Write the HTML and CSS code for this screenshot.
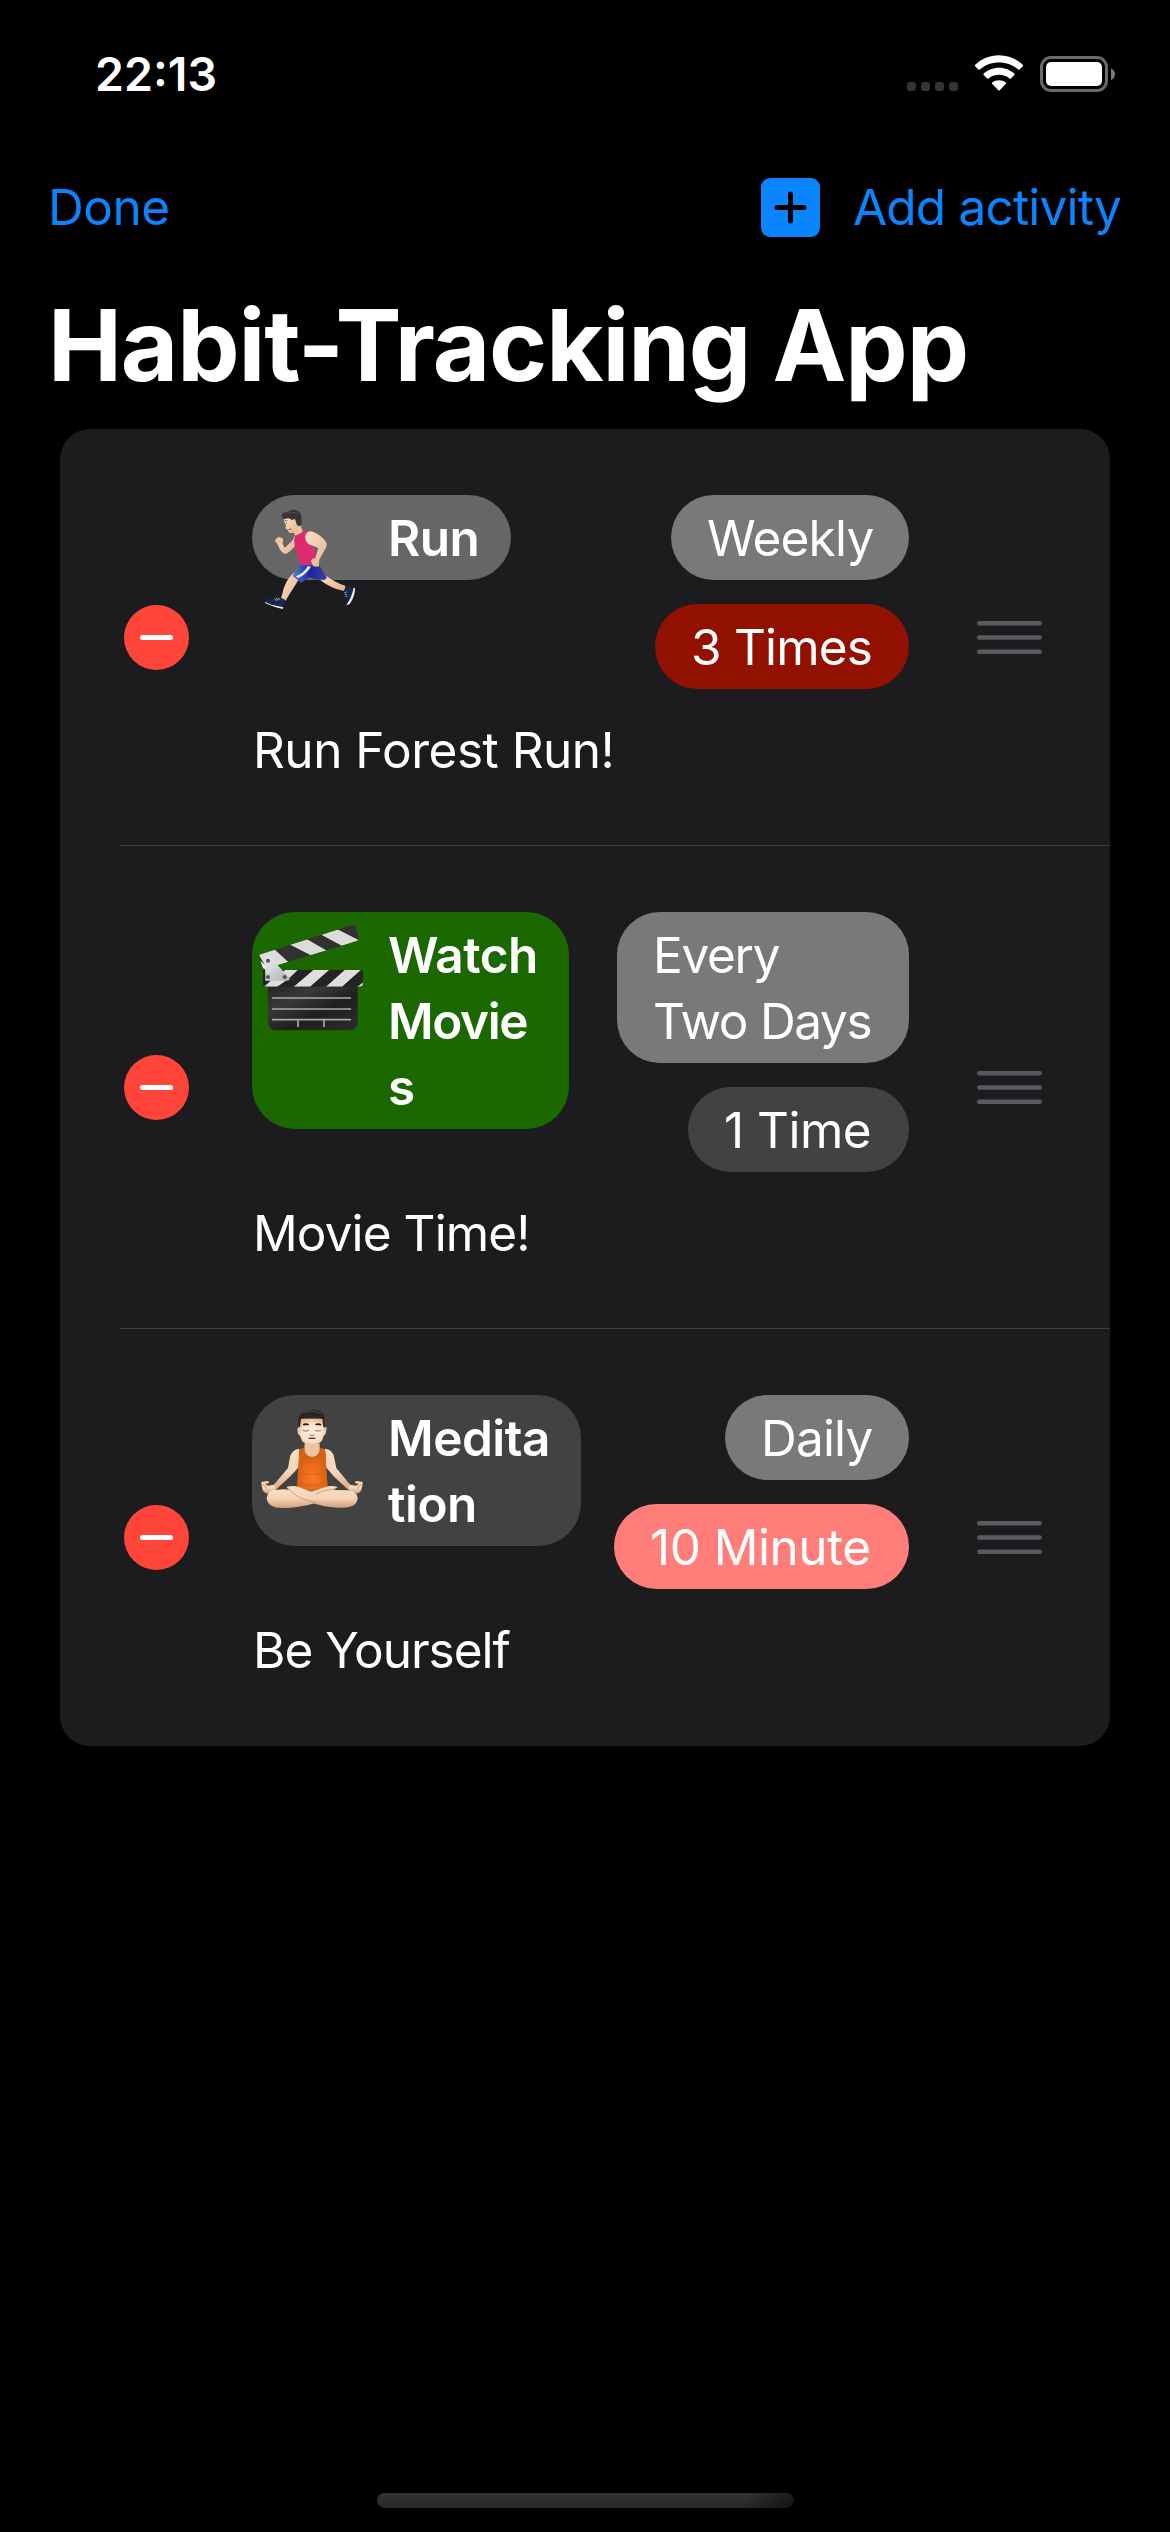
FILE: index.html
```html
<!DOCTYPE html>
<html lang="en">
<head>
<meta charset="utf-8">
<title>Habit-Tracking App</title>
<link rel="stylesheet" href="styles.css">
</head>
<body>
<header class="status">
  <span class="clock">22:13</span>
  <span class="signals">
    <svg class="dots" viewBox="0 0 51 9" width="51" height="9" fill="#343434"><rect width="9" height="9" rx="3"/><rect x="14" width="9" height="9" rx="3"/><rect x="28" width="9" height="9" rx="3"/><rect x="42" width="9" height="9" rx="3"/></svg>
    <svg class="wifi" viewBox="0 0 48 36" width="48" height="36" fill="#fff">
      <path d="M24 .2C33.200 .2 41.600 3.800 47.800 9.700Q48.500 10.500 47.800 11.300L44.600 14.500Q43.900 15.200 43.100 14.500C38.100 9.900 31.400 7.500 24 7.500S9.900 9.900 4.900 14.500Q4.100 15.200 3.400 14.500L.2 11.300Q-.5 10.500 .2 9.700C6.400 3.800 14.800 .2 24 .2Z"/>
      <path d="M24 12.700C29.900 12.700 35.300 15 39.300 18.600Q40 19.300 39.300 20L35.900 23.400Q35.200 24 34.500 23.400C31.700 21 28 19.700 24 19.700S16.300 21 13.500 23.400Q12.800 24 12.100 23.400L8.700 20Q8 19.300 8.700 18.600C12.700 15 18.100 12.700 24 12.700Z"/>
      <path d="M24 25.200Q28.200 25.200 30.800 27.600Q31.400 28.300 30.800 29L24.700 35.200Q24 35.900 23.300 35.200L17.200 29Q16.600 28.300 17.200 27.600Q19.800 25.200 24 25.200Z"/>
    </svg>
    <svg class="battery" viewBox="0 0 75 36" width="75" height="36"><rect x="1.500" y="1.500" width="65" height="33" rx="9.500" fill="none" stroke="#6a6a6a" stroke-width="3"/><rect x="6" y="6" width="56" height="24" rx="5" fill="#fff"/><path d="M71 12.500Q75 14.300 75 18.200T71 24Z" fill="#7a7a7a"/></svg>
  </span>
</header>
<nav class="toolbar">
  <span class="done">Done</span>
  <span class="add">
    <svg viewBox="0 0 59 59" width="59" height="59"><rect width="59" height="59" rx="9" fill="#0a84ff"/><path d="M29.500 16v27M16 29.500h27" stroke="#000" stroke-width="5" stroke-linecap="round"/></svg>
    <span class="add-label">Add activity</span>
  </span>
</nav>
<h1 class="title">Habit-Tracking App</h1>
<main class="card">
  <section class="row">
    <svg class="minus" viewBox="0 0 65 65" width="65" height="65"><circle cx="32.500" cy="32.500" r="32.500" fill="#ff453a"/><path d="M18.500 32.500h28" stroke="#fff" stroke-width="5" stroke-linecap="round"/></svg>
    <div class="content">
      <div class="top">
        <div class="name name-run">
          <svg class="emoji" viewBox="36 45 336 351" width="112" height="117">
            <defs>
              <linearGradient id="skin" x2="1" y2="1"><stop stop-color="#fde2c4"/><stop offset="1" stop-color="#e3b18a"/></linearGradient>
              <linearGradient id="shirt" x2="1" y2="1"><stop stop-color="#d92b67"/><stop offset="1" stop-color="#e02b77"/></linearGradient>
              <linearGradient id="shorts" x2="1"><stop stop-color="#5585cf"/><stop offset=".5" stop-color="#1c25a4"/><stop offset="1" stop-color="#3f3fa0"/></linearGradient>
            </defs>
            <path d="M162 278C146 290 133 314 129 334L122 358L137 362C151 337 168 315 178 294Z" fill="url(#skin)"/>
            <path d="M232 292C254 314 282 327 312 333L318 318C295 311 272 297 254 284Z" fill="url(#skin)"/>
            <path d="M75 365Q77 357 88 357L105 360L124 354L136 360Q133 374 130 386L112 383L80 372Z" fill="#162750"/>
            <path d="M75 366L94 374L130 382L128 387Q100 381 76 370Z" fill="#e9edf0"/><path d="M103 357l8 5m-3-7l8 5m-2-6l7 5" stroke="#eef2f5" stroke-width="2"/>
            <path d="M316 318L343 323Q346 344 332 366L320 376L319 368L322 351L312 340Z" fill="#162750"/>
            <path d="M341 323L345 324Q346 347 329 372L319 376Q336 350 341 323Z" fill="#edf0f2"/><path d="M313 338l7-2m-6 8l7-2m-5 8l6-2" stroke="#dde6f0" stroke-width="2"/>
            <path d="M183 255L239 257L261 293L253 300L225 298L209 292L184 308L158 288Q166 268 183 255Z" fill="url(#shorts)"/>
            <path d="M203 258L213 260Q199 283 174 294L168 289Q194 278 203 258Z" fill="#eef0f7"/>
            <path d="M167 161L158 181L134 204L125 185L113 191Q120 217 137 222Q149 218 170 192Z" fill="url(#skin)"/>
            <path d="M106 184Q106 172 118 171L128 175Q132 184 127 192L114 196Z" fill="#f1c49d"/>
            <path d="M157 149L167 169L191 161L181 135Z" fill="#efc29b"/>
            <path d="M165 167Q178 164 190 154L205 153L217 190L229 233L222 253L184 255Q165 216 162 181Z" fill="url(#shirt)"/>
            <path d="M196 164Q206 149 220 156Q241 164 257 184Q263 193 259 201L238 239L236 260L220 259L213 244L216 237L226 234L235 204L205 192Q194 183 196 164Z" fill="url(#skin)"/>
            <path d="M135 112Q129 125 138 136L136 145L143 149Q145 159 155 159Q168 157 180 137L178 120L158 108Z" fill="url(#skin)"/>
            <path d="M125 107Q127 96 140 97Q159 83 177 95Q189 108 183 136L175 139L170 133L165 117L155 120Q149 111 135 117Q127 116 125 107Z" fill="#373438"/>
            <path d="M133 105Q154 91 172 101" fill="none" stroke="#5e595b" stroke-width="2"/>
            <path d="M135 122l8 1" stroke="#433328" stroke-width="2"/><ellipse cx="142" cy="130" rx="3" ry="4" fill="#fff"/><circle cx="140" cy="130" r="2" fill="#3d2923"/><path d="M145 149l10-2" stroke="#9d4c42" stroke-width="3"/>
          </svg>
          <span>Run</span>
        </div>
        <div class="tags"><span class="tag gray weekly">Weekly</span><span class="tag red times">3 Times</span></div>
      </div>
      <p class="note note-run">Run Forest Run!</p>
    </div>
    <svg class="grip" viewBox="0 0 65 33" width="65" height="33"><path d="M2.300 2.300h60.400M2.300 16.500h60.400M2.300 30.700h60.400" stroke="#5a5a5e" stroke-width="4.500" stroke-linecap="round"/></svg>
  </section>
  <section class="row">
    <svg class="minus" viewBox="0 0 65 65" width="65" height="65"><circle cx="32.500" cy="32.500" r="32.500" fill="#ff453a"/><path d="M18.500 32.500h28" stroke="#fff" stroke-width="5" stroke-linecap="round"/></svg>
    <div class="content">
      <div class="top">
        <div class="name name-movies">
          <svg class="emoji" viewBox="36 36 336 360" width="112" height="120">
            <defs>
              <linearGradient id="board" x2="1" y2="1"><stop stop-color="#242424"/><stop offset=".3" stop-color="#3b3838"/><stop offset=".6" stop-color="#201e1e"/><stop offset="1" stop-color="#2e2c2c"/></linearGradient>
              <linearGradient id="plate" x2="1" y2="1"><stop stop-color="#eef2f4"/><stop offset="1" stop-color="#a9b0b3"/></linearGradient>
              <clipPath id="arm"><path d="M58 164L337 75Q344 73 347 80L356 115Q357 121 351 123L77 206Q71 209 68 202L57 170Z"/></clipPath>
              <clipPath id="bar"><path d="M69 209H363Q369 209 369 216V248Q369 260 358 260H80Q68 260 68 248Z"/></clipPath>
            </defs>
            <path d="M83 255H353V366Q353 391 328 391H110Q84 391 84 364Z" fill="url(#board)"/>
            <path d="M96 294H333M96 327H333M96 359H333M174 359V381M252 359V381" stroke="#aaa" stroke-width="5"/>
            <g clip-path="url(#arm)">
              <path d="M50 65H365V215H50Z" fill="#323131"/>
              <path d="M54 160L103 148L145 186L83 210ZM146 132L196 115L262 153L217 168ZM241 103L292 88L357 121L307 138Z" fill="#dcdcdc"/>
              <path d="M59 181L80 199L77 210L64 204Z" fill="#eee"/>
            </g>
            <g clip-path="url(#bar)">
              <path d="M60 205H375V265H60Z" fill="#252424"/>
              <path d="M137 209H174L144 238L109 262H70L108 228ZM221 209H268L208 262H159ZM315 209H363L304 262H256ZM350 262L373 244V265Z" fill="#dedede"/>
            </g>
            <path d="M75 180Q76 168 90 170L148 234Q151 242 140 242H76Z" fill="url(#plate)"/>
            <g fill="#555" stroke="#333"><circle cx="84" cy="182" r="5.500"/><circle cx="84" cy="231" r="5.500"/><circle cx="134" cy="231" r="5.500"/></g>
          </svg>
          <span>Watch<br><span class="tight">Movie</span><br>s</span>
        </div>
        <div class="tags"><span class="tag gray every">Every<br>Two Days</span><span class="tag dark once">1 Time</span></div>
      </div>
      <p class="note note-movies">Movie Time!</p>
    </div>
    <svg class="grip" viewBox="0 0 65 33" width="65" height="33"><path d="M2.300 2.300h60.400M2.300 16.500h60.400M2.300 30.700h60.400" stroke="#5a5a5e" stroke-width="4.500" stroke-linecap="round"/></svg>
  </section>
  <section class="row">
    <svg class="minus" viewBox="0 0 65 65" width="65" height="65"><circle cx="32.500" cy="32.500" r="32.500" fill="#ff453a"/><path d="M18.500 32.500h28" stroke="#fff" stroke-width="5" stroke-linecap="round"/></svg>
    <div class="content">
      <div class="top">
        <div class="name name-meditation">
          <svg class="emoji" viewBox="36 45 336 351" width="112" height="117">
            <defs>
              <linearGradient id="limb" x2="0" y2="1"><stop stop-color="#f9dcc2"/><stop offset=".55" stop-color="#f5d6b8"/><stop offset="1" stop-color="#d69f7b"/></linearGradient>
              <radialGradient id="face"><stop stop-color="#ffefdd"/><stop offset=".7" stop-color="#fbe2cc"/><stop offset="1" stop-color="#e7b993"/></radialGradient>
              <radialGradient id="vest" cy=".7"><stop stop-color="#fb7a26"/><stop offset="1" stop-color="#dc6014"/></radialGradient>
            </defs>
            <path d="M178 206Q157 208 150 230L144 264L101 315Q88 324 79 318L82 334L101 335L151 289L176 262ZM255 206Q276 208 282 230L289 264L331 315Q344 324 353 318L350 334L331 335L281 289L258 262Z" fill="url(#limb)"/>
            <path d="M64 311Q63 303 70 305L81 303Q89 304 86 309L77 311L84 317L102 314L107 324L93 338Q76 345 68 331ZM368 311Q369 303 362 305L351 303Q343 304 346 309L355 311L348 317L330 314L325 324L339 338Q356 345 364 331Z" fill="url(#limb)"/>
            <path d="M68 312l12 14m-4-16l4 8M364 312l-12 14m4-16l-4 8" fill="none" stroke="#b98566" stroke-width="2.500"/>
            <path d="M190 323L240 321L230 370L205 369Z" fill="#467393"/>
            <path d="M194 191H239V212Q236 230 216 231Q197 230 193 212Z" fill="#edc4a1"/>
            <path d="M179 207L192 204Q197 232 216 232Q236 232 241 204L254 207Q259 220 257 239L263 320Q234 336 203 330L171 321L176 242Z" fill="url(#vest)"/>
            <path d="M173 277Q218 292 260 275M177 309Q222 324 261 305" fill="none" stroke="#d25b14" stroke-width="3" opacity=".6"/>
            <path d="M139 321Q161 314 179 322Q200 331 228 341Q281 357 228 369Q175 384 128 384Q82 384 80 354Q82 328 111 329Q137 326 149 330Z" fill="url(#limb)"/>
            <path d="M293 321Q271 314 254 322L231 330Q202 342 180 330L155 321L142 324Q157 347 203 363Q253 384 304 383Q351 384 353 354Q350 332 322 331L281 330Z" fill="url(#limb)"/>
            <path d="M145 325Q174 360 231 368M226 343Q254 328 286 326" fill="none" stroke="#bd8260" stroke-width="2"/>
            <path d="M174 143Q170 144 174 162L180 167L186 183Q199 197 215 198Q232 197 246 182L252 166Q258 166 260 143L254 140V116H177V140Z" fill="url(#face)"/>
            <path d="M176 142Q171 110 183 101Q195 88 220 90Q252 91 254 113L255 143L250 140L247 116Q218 109 183 116L180 140Z" fill="#292523"/>
            <path d="M189 98Q219 87 245 102" fill="none" stroke="#494340" stroke-width="4"/>
            <path d="M190 135Q197 130 206 134M227 134Q234 130 243 135" fill="none" stroke="#251c18" stroke-width="5"/>
            <path d="M188 151Q197 156 207 151M225 151Q235 156 243 151" fill="none" stroke="#7b5444" stroke-width="2.500"/>
            <path d="M209 163Q216 172 223 163" fill="none" stroke="#c18969" stroke-width="4"/><path d="M206 175H226" stroke="#512f28" stroke-width="4"/>
          </svg>
          <span>Medita<br>tion</span>
        </div>
        <div class="tags"><span class="tag gray daily">Daily</span><span class="tag pink minute">10 Minute</span></div>
      </div>
      <p class="note note-meditation">Be Yourself</p>
    </div>
    <svg class="grip" viewBox="0 0 65 33" width="65" height="33"><path d="M2.300 2.300h60.400M2.300 16.500h60.400M2.300 30.700h60.400" stroke="#5a5a5e" stroke-width="4.500" stroke-linecap="round"/></svg>
  </section>
</main>
<footer class="home"><div class="home-bar"></div></footer>
</body>
</html>
```

FILE: styles.css
```css
* { box-sizing: border-box; margin: 0; }

body {
  width: 1170px;
  height: 2532px;
  display: flex;
  flex-direction: column;
  overflow: hidden;
  background: #000;
  color: #fff;
  font: 400 49.5px/66px Inter, "Liberation Sans", sans-serif;
  letter-spacing: -0.5px;
  white-space: nowrap;
}

svg { display: block; flex: none; }

.status {
  height: 141px;
  padding: 0 55px 0 95px;
  display: flex;
  justify-content: space-between;
  align-items: flex-start;
}
.clock {
  padding-top: 41px;
  font-size: 46.5px;
  font-weight: 600;
  letter-spacing: 0;
}
.signals { display: flex; padding-top: 55px; }
.dots { margin: 27px 17px 0 0; }
.wifi { margin-right: 17px; }
.battery { margin-top: 1px; }

.toolbar {
  height: 132px;
  padding: 0 49px 0 48px;
  display: flex;
  justify-content: space-between;
  align-items: center;
  color: #0a84ff;
}
.add { display: flex; align-items: center; }
.add-label { width: 268px; margin-left: 33px; letter-spacing: -0.8px; }

.title {
  height: 156px;
  padding: 12px 0 0 48px;
  font-size: 99px;
  line-height: 120px;
  font-weight: 700;
  letter-spacing: -1.1px;
}

.card {
  margin: 0 60px;
  border-radius: 30px;
  background: #1c1c1e;
}
.row {
  position: relative;
  display: flex;
  align-items: center;
  padding: 0 68px 0 64px;
}
.row:not(:last-child)::after {
  content: "";
  position: absolute;
  left: 60px;
  right: 0;
  bottom: 0;
  height: 1px;
  background: #3d3d40;
}
.content { width: 657px; margin: 0 68px 0 63px; padding: 66px 0 63px; }
.top { display: flex; justify-content: space-between; align-items: flex-start; }

.name {
  position: relative;
  padding: 10px 0 9px 136px;
  border-radius: 43px;
  font-weight: 600;
}
.name-run { width: 259px; background: #666; }
.name-movies { width: 317px; background: #1c6800; }
.name-meditation { width: 329px; background: #424242; }
.emoji { position: absolute; left: 0; top: 0; }
.tight { letter-spacing: -1.4px; }

.tags { display: flex; flex-direction: column; align-items: flex-end; gap: 24px; }
.tag { padding: 10px 0 9px 36px; border-radius: 43px; }
.gray { background: #797979; }
.red { background: #921100; }
.dark { background: #424242; }
.pink { background: #ff7e79; }
.weekly { width: 238px; letter-spacing: -0.8px; }
.times { width: 254px; letter-spacing: -0.8px; }
.every { width: 292px; letter-spacing: -1.3px; }
.once { width: 221px; }
.daily { width: 184px; letter-spacing: -0.8px; }
.minute { width: 295px; }

.note { padding: 28px 0 0 1px; }
.note-movies { letter-spacing: -0.9px; }
.note-meditation { letter-spacing: -1px; }

.home { margin-top: auto; padding: 0 376px 24px 377px; }
.home-bar {
  height: 15px;
  border-radius: 8px;
  background: linear-gradient(100deg, transparent 88%, #0008), linear-gradient(#333, #272727);
}
```
